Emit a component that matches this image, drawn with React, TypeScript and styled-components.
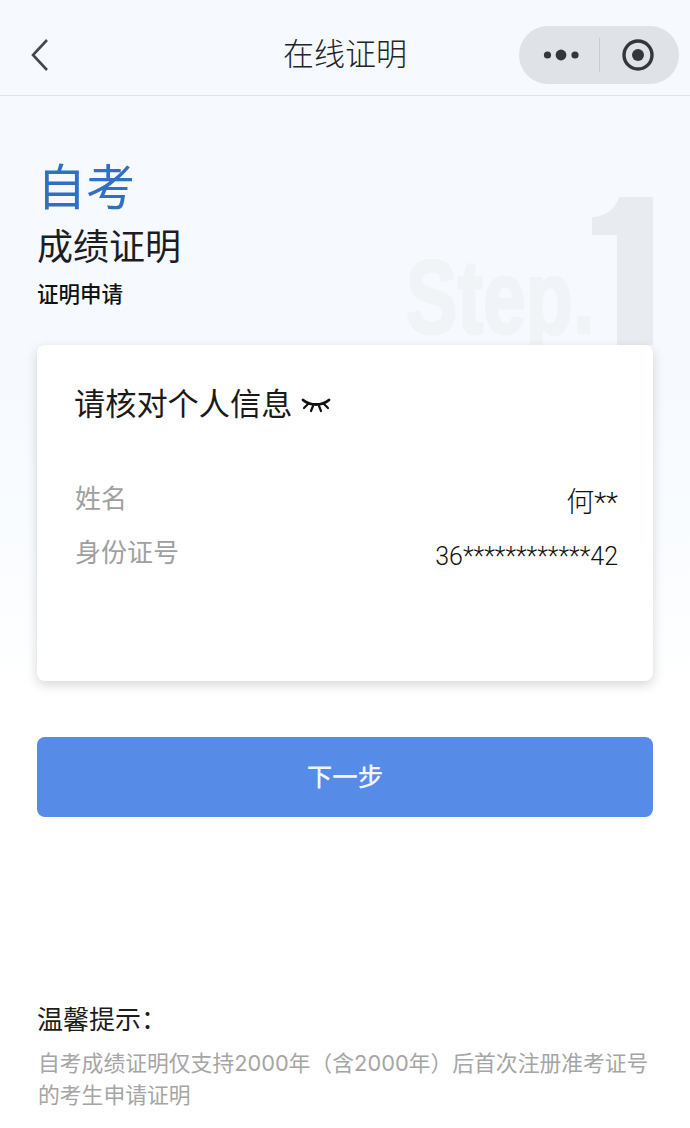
import * as React from "react";
import styled, { createGlobalStyle } from "styled-components";

const GlobalStyle = createGlobalStyle`
  html, body {
    margin: 0;
    padding: 0;
    background: #ffffff;
  }
  body {
    font-family: "Liberation Sans", "Noto Sans CJK SC", sans-serif;
  }
`;

const Page = styled.div`
  width: 690px;
  height: 1128px;
  overflow: hidden;
  display: flex;
  flex-direction: column;
  background: linear-gradient(180deg, #f6faff 0%, #f6faff 35%, #fbfdff 52%, #ffffff 62%);
`;

const NavBar = styled.header`
  box-sizing: border-box;
  height: 96px;
  flex-shrink: 0;
  padding: 26px 11px 0 29px;
  display: flex;
  justify-content: space-between;
  align-items: flex-start;
  border-bottom: 1px solid #e1e4e8;
  position: relative;
`;

const BackButton = styled.div`
  display: flex;
  height: 58px;
  align-items: center;
`;

const NavTitle = styled.div`
  position: absolute;
  left: 0;
  right: 0;
  top: 30px;
  text-align: center;
  font-size: 31px;
  line-height: 50px;
  font-weight: 300;
  color: #222427;
`;

const Capsule = styled.div`
  width: 160px;
  height: 58px;
  border-radius: 29px;
  background: #dfe2e6;
  display: flex;
  align-items: center;
  padding-left: 24px;
  box-sizing: border-box;
`;

const CapsuleDivider = styled.div`
  width: 1px;
  height: 34px;
  background: #c9ccd0;
  margin: 0 22px 0 18px;
`;

const Main = styled.main`
  flex: 1;
  display: flex;
  flex-direction: column;
  padding: 0 37px;
  position: relative;
`;

const Heading = styled.div`
  padding: 60px 0 0 0;
  height: 249px;
  box-sizing: border-box;
  display: flex;
  flex-direction: column;
`;

const ExamName = styled.div`
  font-size: 49px;
  line-height: 64px;
  color: #2f6fc4;
`;

const CertName = styled.div`
  font-size: 36px;
  line-height: 52px;
  margin-top: 2px;
  color: #1d1d1f;
`;

const StepName = styled.div`
  font-size: 21.5px;
  line-height: 32px;
  margin-top: 5px;
  color: #111;
  font-weight: 500;
`;

const Watermark = styled.div`
  position: absolute;
  right: 37px;
  top: 98px;
  height: 151px;
  display: flex;
  align-items: flex-end;
  font-weight: 700;
  user-select: none;
`;

const WatermarkWord = styled.span`
  display: inline-block;
  font-size: 104px;
  line-height: 104px;
  color: #f1f4f7;
  transform: scaleX(0.74);
  transform-origin: right bottom;
  margin: 0 -5px -4px 0;
  -webkit-text-stroke: 3px #f1f4f7;
`;

const WatermarkDigit = styled.svg`
  position: relative;
  width: 64px;
  height: 148px;
  display: block;
`;

const Card = styled.section`
  position: relative;
  box-sizing: border-box;
  height: 336px;
  flex-shrink: 0;
  background: #ffffff;
  border-radius: 8px;
  box-shadow: 0 4px 12px rgba(0, 0, 0, 0.16);
  padding: 34px 35px 0 38px;
`;

const CardTitle = styled.h2`
  margin: 0 0 48px -1px;
  font-size: 31.2px;
  line-height: 52px;
  font-weight: 400;
  color: #1a1a1a;
  display: flex;
  align-items: center;
`;

const EyeIcon = styled.svg`
  width: 30px;
  height: 20px;
  margin-left: 9px;
`;

const InfoRow = styled.div`
  display: flex;
  justify-content: space-between;
  height: 54px;
`;

const InfoLabel = styled.span`
  font-size: 26px;
  line-height: 40px;
  color: #a0a0a0;
`;

const InfoValue = styled.span<{ $size: number }>`
  font-family: Roboto, "Noto Sans CJK SC", sans-serif;
  font-weight: 300;
  font-size: ${(p) => p.$size}px;
  line-height: 40px;
  margin-top: 4px;
  color: #111;
`;

const NextButton = styled.button`
  margin-top: 56px;
  height: 80px;
  flex-shrink: 0;
  border: 0;
  border-radius: 8px;
  background: #568be8;
  color: #f2f6ff;
  font-family: inherit;
  font-size: 25.5px;
  font-weight: 500;
  padding: 0 0 6px;
`;

const Tips = styled.div`
  margin-top: 183px;
`;

const TipsTitle = styled.div`
  font-size: 26px;
  line-height: 40px;
  color: #1c1c1c;
`;

const TipsBody = styled.p`
  margin: 7px 0 0 1px;
  font-family: Inter, "Noto Sans CJK SC", sans-serif;
  font-size: 21.8px;
  line-height: 32px;
  color: #a5a5a5;
  white-space: pre;
`;

export default function App() {
  return (
    <Page>
      <GlobalStyle />
      <NavBar>
        <BackButton>
          <svg width="22" height="34" viewBox="0 0 22 34" fill="none">
            <path d="M18 2 L4 17 L18 32" stroke="#44474a" strokeWidth="2.6" />
          </svg>
        </BackButton>
        <NavTitle>在线证明</NavTitle>
        <Capsule>
          <svg width="38" height="16" viewBox="0 0 38 16" fill="#34373a">
            <circle cx="4.5" cy="8" r="3.6" />
            <circle cx="18" cy="8" r="5.4" />
            <circle cx="32" cy="8" r="3.6" />
          </svg>
          <CapsuleDivider />
          <svg width="32" height="32" viewBox="0 0 32 32" fill="none">
            <circle cx="16" cy="16" r="14" stroke="#34373a" strokeWidth="3.4" />
            <circle cx="16" cy="16" r="6" fill="#34373a" />
          </svg>
        </Capsule>
      </NavBar>
      <Main>
        <Watermark aria-hidden="true">
          <WatermarkWord>Step.</WatermarkWord>
          <WatermarkDigit viewBox="0 0 64 148">
            <path d="M30 0 H64 V148 H28 V38 H3 V20 C16 20 27 12 30 0 Z" fill="#e8ebef" />
          </WatermarkDigit>
        </Watermark>
        <Heading>
          <ExamName>自考</ExamName>
          <CertName>成绩证明</CertName>
          <StepName>证明申请</StepName>
        </Heading>
        <Card>
          <CardTitle>
            请核对个人信息
            <EyeIcon viewBox="0 0 30 20" fill="none" stroke="#111" strokeLinecap="round">
              <path d="M2 5 C9 11 21 11 28 5" strokeWidth="2.8" />
              <path d="M7 9 L3 13 M12 11 L10 16 M18 11 L20 16 M23 9 L27 13" strokeWidth="2.2" />
            </EyeIcon>
          </CardTitle>
          <InfoRow>
            <InfoLabel>姓名</InfoLabel>
            <InfoValue $size={28}>何**</InfoValue>
          </InfoRow>
          <InfoRow>
            <InfoLabel>身份证号</InfoLabel>
            <InfoValue $size={25}>36************42</InfoValue>
          </InfoRow>
        </Card>
        <NextButton>下一步</NextButton>
        <Tips>
          <TipsTitle>温馨提示：</TipsTitle>
          <TipsBody>{"自考成绩证明仅支持2000年（含2000年）后首次注册准考证号\n的考生申请证明"}</TipsBody>
        </Tips>
      </Main>
    </Page>
  );
}
